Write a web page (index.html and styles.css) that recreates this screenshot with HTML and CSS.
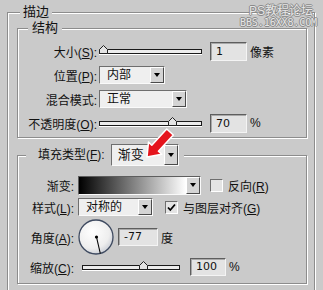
FILE: index.html
```html
<!DOCTYPE html>
<html lang="zh">
<head>
    <meta charset="UTF-8">
    <meta name="viewport" content="width=device-width, initial-scale=1.0">
    <title>描边</title>
    <link rel="stylesheet" href="styles.css">
</head>
<body>
    <div class="watermark">
        <span class="wm-title">PS教程论坛</span>
        <span class="wm-url">BBS.16XX8.COM</span>
    </div>

    <div class="group outer">
        <div class="legend">描边</div>

        <!-- Structure -->
        <div class="group structure">
            <div class="legend">结构</div>
            <div class="rows">
                <div class="row">
                    <span class="lbl">大小(<u>S</u>):</span>
                    <div class="slider slider-long">
                        <svg class="thumb" style="left: -1px" viewBox="0 0 9 9"><path d="M0.5 8.5V4.5L4.5 0.5L8.5 4.5V8.5Z"/></svg>
                    </div>
                    <div class="field field-box1">1</div>
                    <span class="unit">像素</span>
                </div>
                <div class="row">
                    <span class="lbl">位置(<u>P</u>):</span>
                    <div class="select select-pos">
                        <span class="value">内部</span>
                        <span class="btn"></span>
                    </div>
                </div>
                <div class="row">
                    <span class="lbl">混合模式:</span>
                    <div class="select select-blend">
                        <span class="value">正常</span>
                        <span class="btn"></span>
                    </div>
                </div>
                <div class="row">
                    <span class="lbl">不透明度(<u>O</u>):</span>
                    <div class="slider slider-long">
                        <svg class="thumb" style="left: 68px" viewBox="0 0 9 9"><path d="M0.5 8.5V4.5L4.5 0.5L8.5 4.5V8.5Z"/></svg>
                    </div>
                    <div class="field field-box1">70</div>
                    <span class="unit">%</span>
                </div>
            </div>
        </div>

        <!-- Fill type -->
        <div class="group fill">
            <div class="legend">
                <span>填充类型(<u>F</u>):</span>
                <div class="select select-fill">
                    <span class="value">渐变</span>
                    <span class="btn"></span>
                </div>
            </div>
            <div class="rows">
                <div class="row">
                    <span class="lbl">渐变:</span>
                    <div class="gradient">
                        <span class="ramp"></span>
                        <span class="btn"></span>
                    </div>
                    <span class="check check-reverse"></span>
                    <span class="check-label">反向(<u>R</u>)</span>
                </div>
                <div class="row">
                    <span class="lbl">样式(<u>L</u>):</span>
                    <div class="select select-style">
                        <span class="value">对称的</span>
                        <span class="btn"></span>
                    </div>
                    <span class="check check-align">
                        <svg viewBox="0 0 11 11"><path d="M2 5.5L4.3 8L9 2.5" /></svg>
                    </span>
                    <span class="check-label">与图层对齐(<u>G</u>)</span>
                </div>
                <div class="row tall">
                    <span class="lbl">角度(<u>A</u>):</span>
                    <svg class="dial" viewBox="0 0 36 36">
                        <defs>
                            <radialGradient id="dialFill" cx="0.4" cy="0.35" r="0.7">
                                <stop offset="0" stop-color="#ffffff"/>
                                <stop offset="0.7" stop-color="#eeeeee"/>
                                <stop offset="1" stop-color="#c8ccd4"/>
                            </radialGradient>
                        </defs>
                        <circle cx="18" cy="18" r="17" fill="url(#dialFill)" stroke="#3e4a60" stroke-width="1.3"/>
                        <line x1="18.5" y1="18" x2="22.3" y2="34.5" stroke="#000" stroke-width="1.1"/>
                        <circle cx="18.5" cy="18" r="1.6" fill="#000"/>
                    </svg>
                    <div class="field field-angle">-77</div>
                    <span class="unit">度</span>
                </div>
                <div class="row">
                    <span class="lbl">缩放(<u>C</u>):</span>
                    <div class="slider slider-scale">
                        <svg class="thumb" style="left: 56px" viewBox="0 0 9 9"><path d="M0.5 8.5V4.5L4.5 0.5L8.5 4.5V8.5Z"/></svg>
                    </div>
                    <div class="field field-scale">100</div>
                    <span class="unit">%</span>
                </div>
            </div>
        </div>
    </div>

    <!-- Red arrow pointing at the fill type menu -->
    <svg class="pointer" viewBox="0 0 40 40">
        <path d="M7 33L8.5 18.1L11.8 21.2L26.7 5L33.3 11L18.4 27.2L21.7 30.3Z"/>
    </svg>
</body>
</html>
```

FILE: styles.css
```css
/* Base */
html, body {
    margin: 0;
    padding: 0;
    height: 290px;
    overflow: hidden;
}

body {
    background-color: #cacaca;
    color: #111;
    font-family: "Liberation Sans", "Noto Sans CJK SC", sans-serif;
    font-size: 12px;
    position: relative;
}

u {
    text-decoration-thickness: 1px;
    text-underline-offset: 1px;
}

/* Etched group boxes */
.group {
    box-sizing: border-box;
    border: 1px solid #8c8c8c;
    box-shadow: inset 1px 1px 0 #fff, 1px 1px 0 #fff;
}

.legend {
    display: flex;
    align-items: center;
    width: fit-content;
    height: 16px;
    line-height: 16px;
    margin-top: -9px;
    margin-bottom: -7px;
    background-color: #cacaca;
    white-space: nowrap;
}

.outer {
    width: 308px;
    margin: 12px 0 0 7px;
    padding-bottom: 6px; /* bottom edge sits just below the frame */
}

.outer > .legend {
    margin-left: 12px;
    padding: 0 3px;
    font-size: 13px;
}

.structure {
    width: 290px;
    margin: 15px 0 0 9px;
}

.structure > .legend {
    margin-left: 10px;
    padding: 0 4px;
    font-size: 13px;
}

.structure .rows {
    padding: 10px 0 2px;
}

.structure .row {
    height: 24px;
}

.structure .lbl {
    width: 79px;
    margin-right: 2px;
}

.fill {
    width: 290px;
    margin: 17px 0 0 9px;
}

.fill > .legend {
    height: 22px;
    margin: -12px 0 -10px 8px;
    padding: 0 5px 0 12px;
}

.fill .rows {
    padding: 18px 0 5px;
}

.fill .row {
    height: 22px;
}

.fill .row.tall {
    height: 38px;
}

.fill .lbl {
    width: 56px;
    margin-right: 4px;
}

/* Rows */
.row {
    display: flex;
    align-items: center;
}

.lbl {
    flex-shrink: 0;
    text-align: right;
    white-space: nowrap;
}

.unit {
    margin-left: 3px;
}

/* Sliders */
.slider {
    position: relative;
    height: 3px;
    border: 1px solid #1a1a1a;
    background-color: #ececec;
    box-shadow: 0 1px 0 #fff;
}

.slider-long {
    width: 101px;
}

.slider-scale {
    width: 96px;
    margin-left: 4px;
}

.slider .thumb {
    position: absolute;
    top: -5px;
    width: 9px;
    height: 9px;
}

.slider .thumb path {
    fill: #e4e4e4;
    stroke: #222;
    stroke-width: 1;
}

/* Text fields */
.field {
    box-sizing: border-box;
    height: 19px;
    border: 1px solid;
    border-color: #5e5e5e #f4f4f4 #f4f4f4 #5e5e5e;
    box-shadow: inset 1px 1px 0 #a8a8a8;
    background-color: #e3e3e3;
    padding-left: 5px;
    font-family: "DejaVu Sans", sans-serif;
    font-size: 11px;
    line-height: 17px;
}

.field-box1 {
    width: 37px;
    margin-left: 8px;
}

.field-angle {
    width: 40px;
    height: 18px;
    line-height: 16px;
    margin-left: 4px;
}

.field-scale {
    width: 36px;
    height: 18px;
    line-height: 16px;
    margin-left: 10px;
}

/* Drop-down menus */
.select {
    box-sizing: border-box;
    display: flex;
    height: 18px;
    border: 1px solid;
    border-color: #6e6e6e #fafafa #fafafa #6e6e6e;
    background-color: #efefef;
}

.select .value {
    flex: 1;
    padding-left: 7px;
    line-height: 16px;
}

.btn {
    box-sizing: border-box;
    width: 14px;
    display: flex;
    align-items: center;
    justify-content: center;
    border: 1px solid;
    border-color: #fff #4a4a4a #4a4a4a #fff;
    background-color: #d4d4d4;
}

.btn::after {
    content: "";
    border-left: 3.5px solid transparent;
    border-right: 3.5px solid transparent;
    border-top: 4px solid #000;
}

.select-pos {
    width: 66px;
}

.select-blend {
    width: 88px;
}

.select-fill {
    width: 68px;
    height: 22px;
    margin-left: 6px;
}

.select-fill .value {
    line-height: 20px;
    padding-left: 6px;
    font-size: 13px;
}

.select-style {
    width: 75px;
}

/* Gradient picker */
.gradient {
    box-sizing: border-box;
    display: flex;
    width: 123px;
    height: 19px;
    border: 1px solid;
    border-color: #5e5e5e #fafafa #fafafa #5e5e5e;
}

.gradient .ramp {
    flex: 1;
    background: linear-gradient(to right, #000 0%, #fff 100%);
}

/* Checkboxes */
.check {
    box-sizing: border-box;
    width: 13px;
    height: 13px;
    border: 1px solid;
    border-color: #6e6e6e #fff #fff #6e6e6e;
    background-color: #e4e4e4;
    display: flex;
}

.check svg {
    width: 11px;
    height: 11px;
}

.check svg path {
    fill: none;
    stroke: #000;
    stroke-width: 1.8;
}

.check-reverse {
    margin-left: 9px;
}

.check-align {
    margin-left: 12px;
}

.check-label {
    margin-left: 5px;
    white-space: nowrap;
}

/* Angle dial */
.dial {
    width: 36px;
    height: 36px;
}

/* Overlays */
.watermark {
    position: absolute;
    top: 5px;
    right: 6px;
    display: flex;
    flex-direction: column;
    align-items: flex-end;
    color: #e6e6e6;
    text-shadow: 1px 0 #8a8a8a, -1px 0 #8a8a8a, 0 1px #8a8a8a, 0 -1px #8a8a8a;
    line-height: 12px;
}

.wm-title {
    font-size: 12px;
    margin-right: 4px;
}

.wm-url {
    font-family: "DejaVu Sans Mono", monospace;
    font-size: 10px;
    letter-spacing: -0.1px;
}

.pointer {
    position: absolute;
    left: 140px;
    top: 124px;
    width: 40px;
    height: 40px;
}

.pointer path {
    fill: #e5141c;
    stroke: #fff;
    stroke-width: 1.5;
    stroke-linejoin: round;
}
```
